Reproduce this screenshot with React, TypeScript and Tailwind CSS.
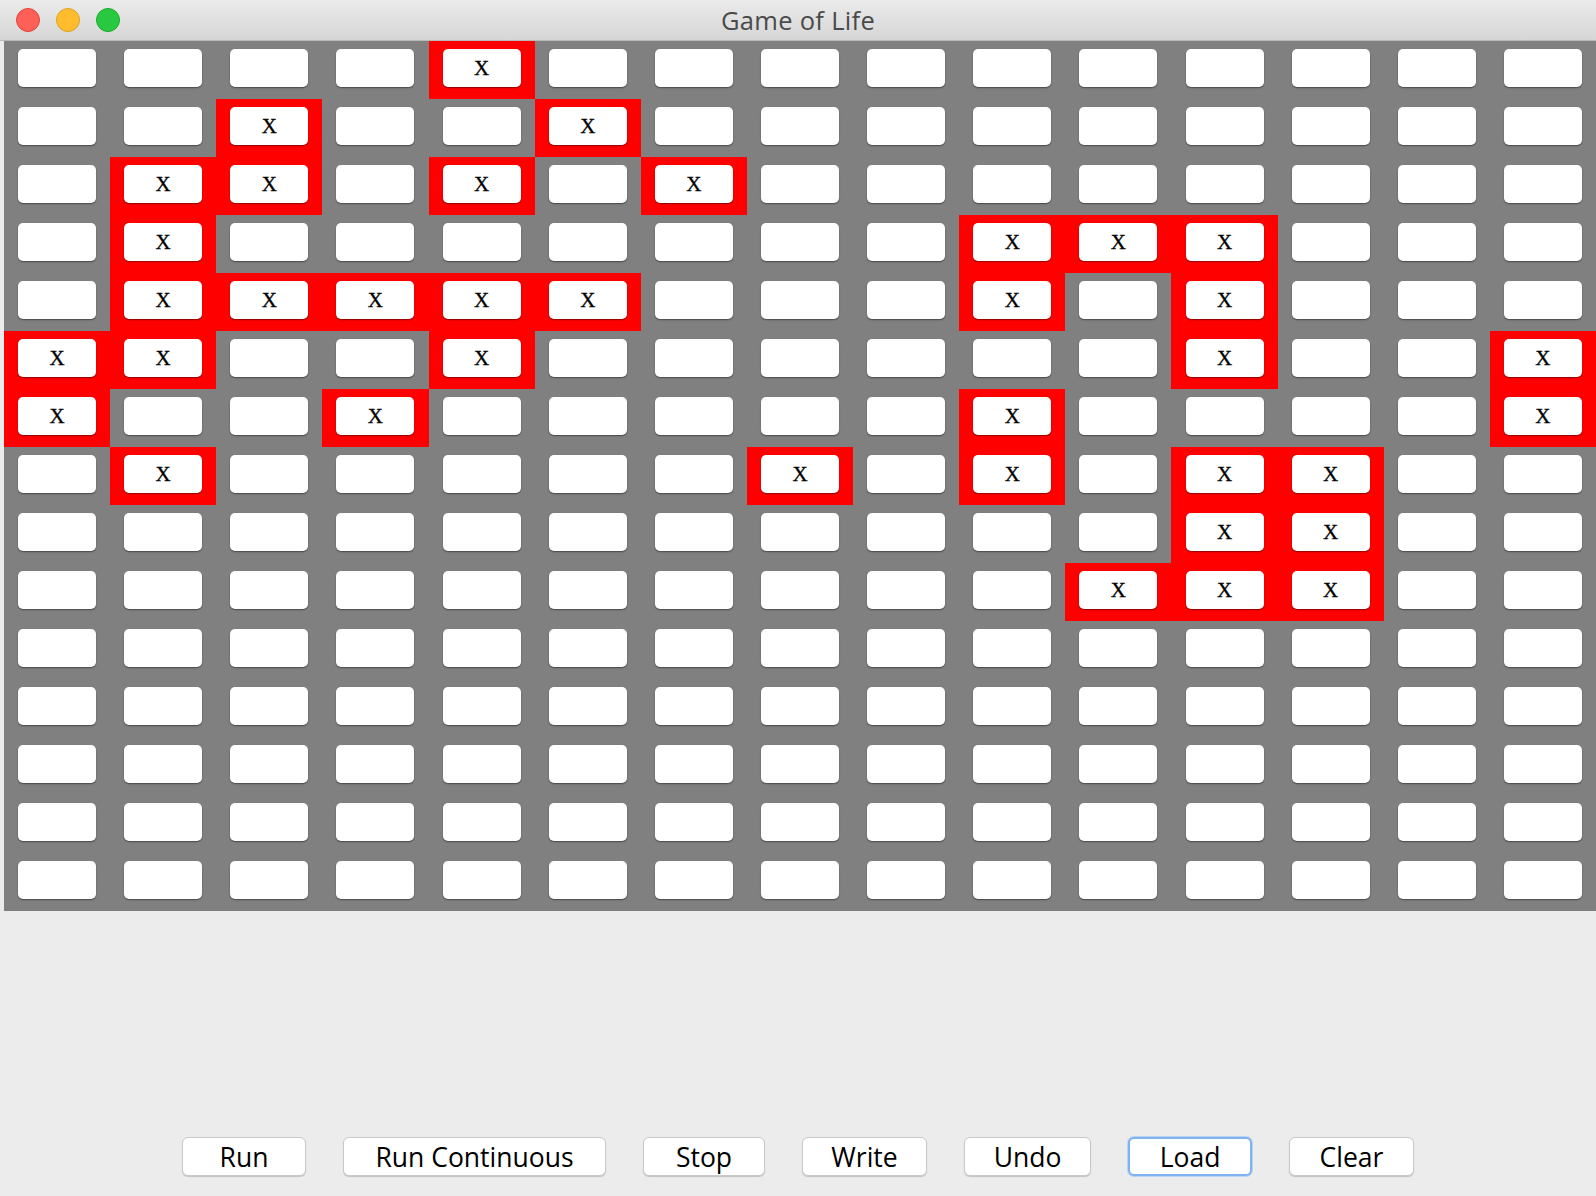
import React from "react";

const ALIVE: number[][] = [
  [4],
  [2, 5],
  [1, 2, 4, 6],
  [1, 9, 10, 11],
  [1, 2, 3, 4, 5, 9, 11],
  [0, 1, 4, 11, 14],
  [0, 3, 9, 14],
  [1, 7, 9, 11, 12],
  [11, 12],
  [10, 11, 12],
  [],
  [],
  [],
  [],
  [],
];

const BUTTONS = [
  { label: "Run", w: "w-[124px]" },
  { label: "Run Continuous", w: "w-[263px]" },
  { label: "Stop", w: "w-[122px]" },
  { label: "Write", w: "w-[125px]" },
  { label: "Undo", w: "w-[127px]" },
  { label: "Load", w: "w-[124px]", focused: true },
  { label: "Clear", w: "w-[125px]" },
];

function Cell({ alive }: { alive: boolean }) {
  return (
    <div className={`h-[58px] pt-[8px] flex justify-center ${alive ? "bg-[#ff0000]" : ""}`}>
      <div className="w-[78px] h-[38px] bg-white rounded-[5px] shadow-[0_1px_1.5px_rgba(0,0,0,0.45)] flex items-center justify-center">
        {alive && (
          <span className="text-[21px] leading-none text-black font-['Liberation_Serif',serif] [-webkit-text-stroke:0.3px_black]">X</span>
        )}
      </div>
    </div>
  );
}

export default function App() {
  return (
    <div className="w-[1596px] h-[1196px] bg-[#ececec] flex flex-col overflow-hidden font-['Open_Sans',sans-serif]">
      {/* title bar */}
      <div className="relative h-[41px] shrink-0 bg-gradient-to-b from-[#ebebeb] to-[#d6d6d6] border-b border-[#b9b9b9] flex items-center justify-center">
        <div className="absolute left-[16px] top-[8px] flex gap-[16px]">
          <div className="w-[24px] h-[24px] rounded-full bg-[#fe5f57] border border-[#e0443e]" />
          <div className="w-[24px] h-[24px] rounded-full bg-[#febc2e] border border-[#dea123]" />
          <div className="w-[24px] h-[24px] rounded-full bg-[#28c840] border border-[#1aab29]" />
        </div>
        <span className="text-[25.5px] text-[#4a4a4a] tracking-[0.3px]">Game of Life</span>
      </div>

      {/* board */}
      <div className="pl-[4px]">
        <div className="grid grid-cols-[repeat(15,minmax(0,1fr))] bg-[#808080] h-[870px]">
          {ALIVE.map((row, r) =>
            Array.from({ length: 15 }, (_, c) => <Cell key={`${r}-${c}`} alive={row.includes(c)} />)
          )}
        </div>
      </div>

      {/* controls */}
      <div className="flex-1 flex items-end justify-center gap-[37px] pb-[20px]">
        {BUTTONS.map((b) => (
          <button
            key={b.label}
            className={`${b.w} h-[39px] bg-white rounded-[6px] text-[26.5px] leading-none text-black flex items-center justify-center pt-[2px] ${
              b.focused
                ? "border-[2px] border-[#7fb2ee] shadow-[0_0_0_1px_#b9d4f5]"
                : "border border-[#c9c9c9] shadow-[0_1px_1px_rgba(0,0,0,0.18)]"
            }`}
          >
            {b.label}
          </button>
        ))}
      </div>
    </div>
  );
}
